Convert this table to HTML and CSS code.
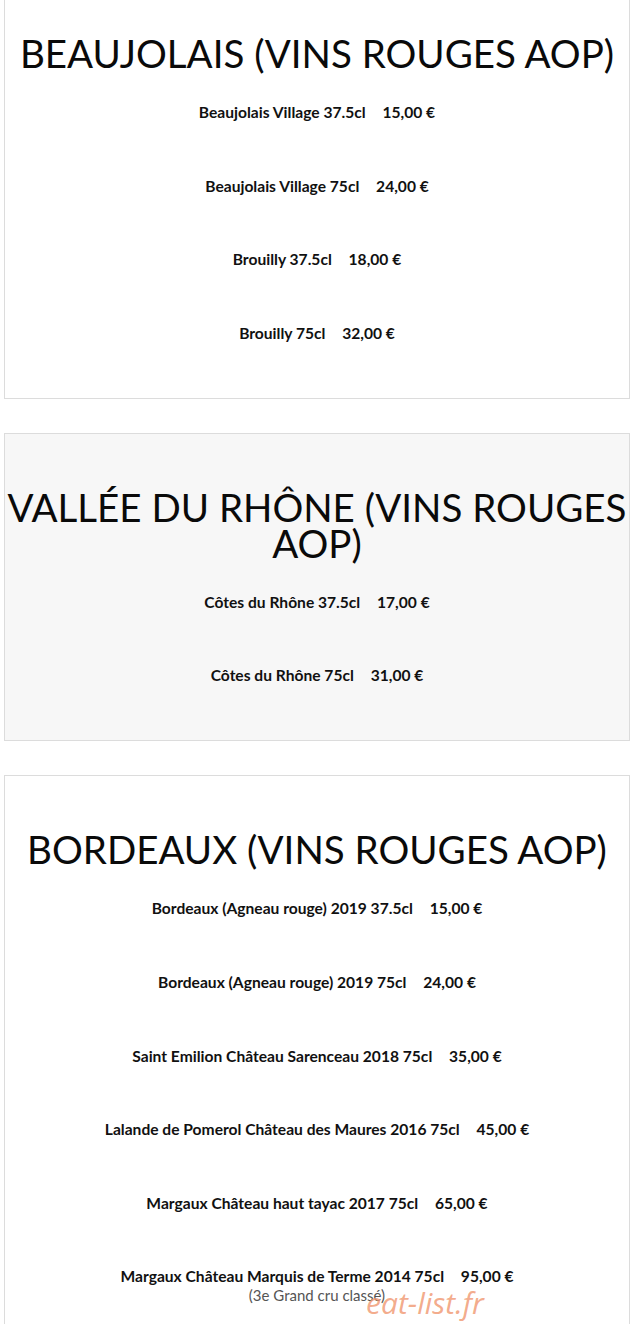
FILE: index.html
```html
<!DOCTYPE html>
<html lang="fr">
<head>
    <meta charset="UTF-8">
    <meta name="viewport" content="width=device-width, initial-scale=1.0">
    <title>Carte des vins</title>
    <link rel="stylesheet" href="styles.css">
</head>
<body>
    <div class="menu">
        <section class="card card-first">
            <h2>BEAUJOLAIS (VINS ROUGES AOP)</h2>
            <ul class="items">
                <li>Beaujolais Village 37.5cl <span class="price">15,00 €</span></li>
                <li>Beaujolais Village 75cl <span class="price">24,00 €</span></li>
                <li>Brouilly 37.5cl <span class="price">18,00 €</span></li>
                <li>Brouilly 75cl <span class="price">32,00 €</span></li>
            </ul>
        </section>

        <section class="card card-grey">
            <h2>VALLÉE DU RHÔNE (VINS ROUGES<br>AOP)</h2>
            <ul class="items">
                <li>Côtes du Rhône 37.5cl <span class="price">17,00 €</span></li>
                <li>Côtes du Rhône 75cl <span class="price">31,00 €</span></li>
            </ul>
        </section>

        <section class="card">
            <h2>BORDEAUX (VINS ROUGES AOP)</h2>
            <ul class="items">
                <li>Bordeaux (Agneau rouge) 2019 37.5cl <span class="price">15,00 €</span></li>
                <li>Bordeaux (Agneau rouge) 2019 75cl <span class="price">24,00 €</span></li>
                <li>Saint Emilion Château Sarenceau 2018 75cl <span class="price">35,00 €</span></li>
                <li>Lalande de Pomerol Château des Maures 2016 75cl <span class="price">45,00 €</span></li>
                <li>Margaux Château haut tayac 2017 75cl <span class="price">65,00 €</span></li>
                <li>Margaux Château Marquis de Terme 2014 75cl <span class="price">95,00 €</span>
                    <span class="note">(3e Grand cru classé)</span></li>
            </ul>
        </section>
    </div>

    <div class="watermark">eat-list.fr</div>
</body>
</html>
```

FILE: styles.css
```css
* {
    box-sizing: border-box;
    margin: 0;
    padding: 0;
}

body {
    font-family: 'Lato', 'Noto Sans', sans-serif;
    background: #fff;
    color: #111;
    height: 1324px;
    overflow: hidden;
}

.menu {
    padding: 0 8px 0 4px;
}

.card {
    border: 1px solid #dcdcdc;
    background: #fff;
    padding: 55px 0 55px;
    margin-bottom: 34px;
    text-align: center;
}

.card-first {
    margin-top: -21px;
}

.card-grey {
    background: #f7f7f7;
}

h2 {
    font-size: 38.5px;
    font-weight: 400;
    line-height: 36px;
    color: #0a0a0a;
    white-space: nowrap;
    margin-bottom: 31px;
}

.items {
    list-style: none;
    display: flex;
    flex-direction: column;
    gap: 53.6px;
}

.items li {
    font-size: 15.6px;
    font-weight: 700;
    line-height: 20px;
}

.price {
    margin-left: 13px;
}

.note {
    display: block;
    font-size: 15px;
    font-weight: 400;
    color: #555;
    line-height: 18px;
}

.watermark {
    position: absolute;
    left: 366px;
    top: 1282px;
    font-family: 'Open Sans', sans-serif;
    font-style: italic;
    font-size: 30px;
    color: rgba(240, 150, 110, 0.8);
}
```
